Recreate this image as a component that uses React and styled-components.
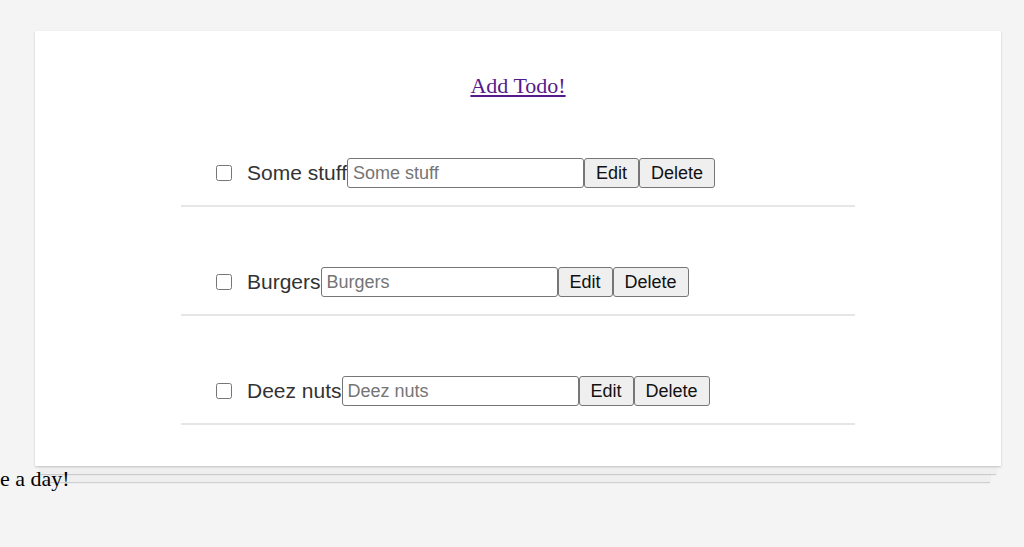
import React, { useState } from "react";
import styled, { createGlobalStyle } from "styled-components";

const GlobalStyle = createGlobalStyle`
  html, body {
    margin: 0;
    padding: 0;
    background: #f4f4f4;
  }
  body {
    font-family: "Liberation Serif", "Times New Roman", serif;
  }
`;

const Page = styled.div`
  padding-top: 31px;
`;

// paper stack under the card is drawn with box-shadows
const Card = styled.section`
  width: 966px;
  margin-left: 35px;
  background: #fff;
  padding: 42px 0 41px;
  box-sizing: border-box;
  box-shadow: 0 1px 2px rgba(0, 0, 0, 0.2), 0 13px 0 -5px #efefef,
    0 14px 1px -5px rgba(0, 0, 0, 0.15), 0 27px 0 -11px #efefef,
    0 28px 1px -11px rgba(0, 0, 0, 0.15);
`;

const Title = styled.div`
  text-align: center;
  font-size: 22px;
  line-height: 25px;

  a {
    color: #551a8b;
  }
`;

const List = styled.ul`
  list-style: none;
  margin: 0 auto;
  padding: 0;
  width: 674px;
`;

const Item = styled.li`
  display: flex;
  align-items: center;
  padding: 60px 0 17px 35px;
  border-bottom: 2px solid #e6e6e6;
  font-family: "Liberation Sans", Arial, sans-serif;
`;

const Check = styled.input`
  width: 16px;
  height: 16px;
  margin: 0 15px 0 0;
`;

const Label = styled.span`
  font-size: 21px;
  color: #333;
`;

const TextField = styled.input`
  width: 237px;
  height: 30px;
  box-sizing: border-box;
  margin: 0;
  padding: 0 5px;
  border: 1px solid #767676;
  border-radius: 3px;
  font-family: "Liberation Sans", Arial, sans-serif;
  font-size: 18px;
  color: #222;

  &::placeholder {
    color: #757575;
  }
`;

const Button = styled.button`
  height: 30px;
  box-sizing: border-box;
  margin: 0;
  padding: 0 11px;
  border: 1px solid #767676;
  border-radius: 3px;
  background: #efefef;
  font-family: "Liberation Sans", Arial, sans-serif;
  font-size: 18px;
  color: #111;
`;

const Footer = styled.p`
  margin: 0;
  font-size: 22px;
  line-height: 25px;
  color: #000;
`;

export default function App() {
  const [todos] = useState(["Some stuff", "Burgers", "Deez nuts"]);
  return (
    <>
      <GlobalStyle />
      <Page>
        <Card>
          <Title>
            <a href="#add">Add Todo!</a>
          </Title>
          <List>
            {todos.map((t) => (
              <Item key={t}>
                <Check type="checkbox" />
                <Label>{t}</Label>
                <TextField type="text" placeholder={t} />
                <Button>Edit</Button>
                <Button>Delete</Button>
              </Item>
            ))}
          </List>
        </Card>
        <Footer>e a day!</Footer>
      </Page>
    </>
  );
}
